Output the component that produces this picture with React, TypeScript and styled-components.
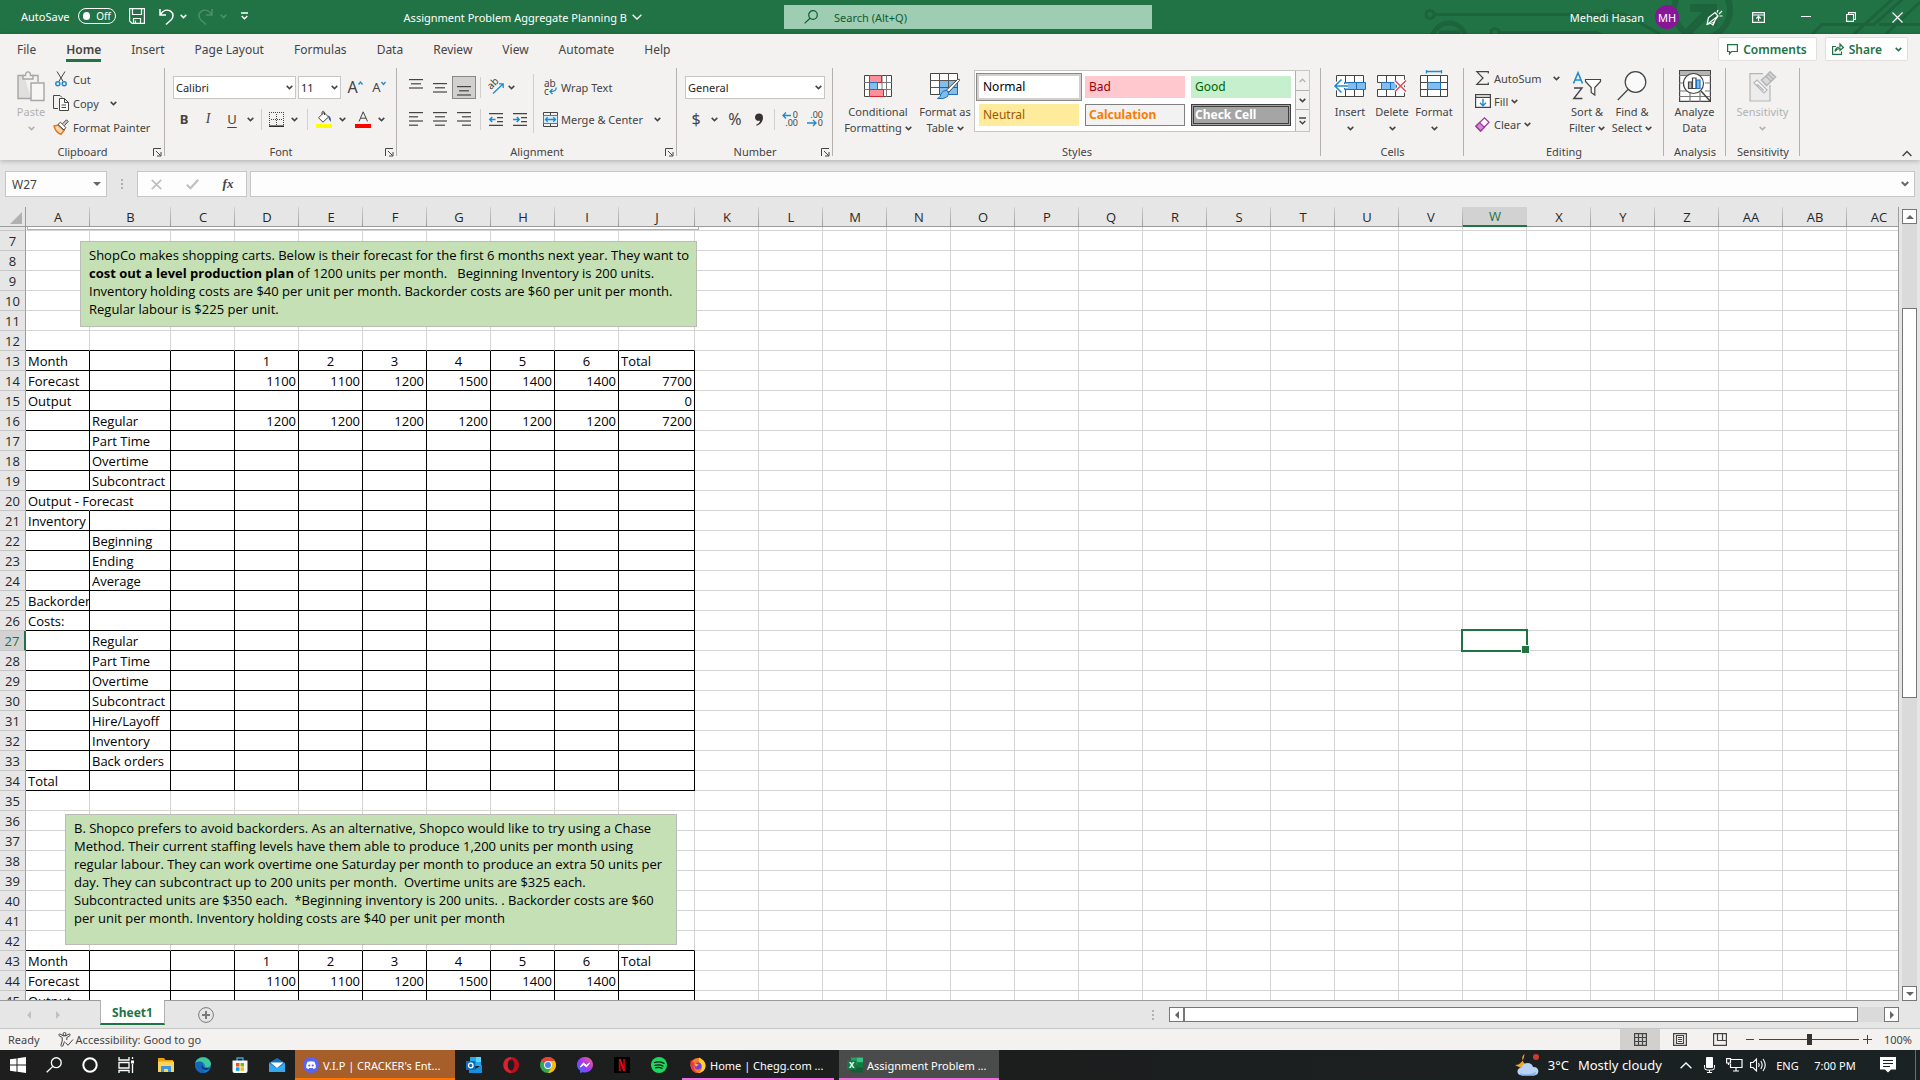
import React from "react";
import styled, { createGlobalStyle, css } from "styled-components";

const UI = `"Noto Sans", "Open Sans", sans-serif`;
const CELL = `"Open Sans", "Noto Sans", sans-serif`;
const GREEN = "#217346";
const BLUE = "#1e8bcd";
const INK = "#444444";

const Global = createGlobalStyle`
  * { box-sizing: border-box; }
  html, body { margin: 0; padding: 0; }
  body { font-family: ${UI}; font-size: 11px; color: ${INK}; overflow: hidden; }
  button, input, select { font: inherit; color: inherit; margin: 0; }
  button { background: none; border: 0; padding: 0; cursor: default; white-space: nowrap; }
  svg { display: block; flex: none; overflow: visible; }
`;

/* ---------- shared pieces ---------- */

const Window = styled.div`
  display: flex;
  flex-direction: column;
  height: 100vh;
  background: #e6e6e6;
`;

const Row = styled.div<{ $gap?: number }>`
  display: flex;
  align-items: center;
  gap: ${(p) => p.$gap ?? 0}px;
`;

const Spacer = styled.div`
  flex: 1;
`;

type SvgProps = { w: number; h: number; children: React.ReactNode; stroke?: string; sw?: number };
const Svg = ({ w, h, children, stroke = INK, sw = 1 }: SvgProps) => (
  <svg width={w} height={h} viewBox={`0 0 ${w} ${h}`} fill="none" stroke={stroke} strokeWidth={sw} aria-hidden="true">
    {children}
  </svg>
);

const Chevron = ({ color = INK }: { color?: string }) => (
  <Svg w={7} h={5} stroke={color} sw={1.5}>
    <path d="M0.7 0.9 L3.5 3.6 L6.3 0.9" />
  </Svg>
);

/* ---------- title bar ---------- */

const TitleBar = styled.header`
  position: relative;
  display: grid;
  grid-template-columns: 784fr 368fr 768fr;
  height: 34px;
  background: ${GREEN};
  color: #ffffff;
`;

const TitleArt = styled.div`
  position: absolute;
  right: 0;
  top: 0;
  height: 34px;
  overflow: hidden;
`;

const QuickAccess = styled.div`
  display: flex;
  align-items: center;
  height: 32px;
  padding-left: 21px;
`;

const IconButton = styled.button<{ $w: number; $h?: number; $on?: boolean }>`
  display: inline-flex;
  align-items: center;
  justify-content: center;
  flex: none;
  width: ${(p) => p.$w}px;
  height: ${(p) => p.$h ?? 24}px;
  ${(p) =>
    p.$on &&
    css`
      background: #d2d0ce;
      border: 1px solid #8a8886;
    `}
`;

const AutoSave = styled.label`
  display: flex;
  align-items: center;
  width: 95px;
  justify-content: space-between;
`;

const Toggle = styled.button`
  display: flex;
  align-items: center;
  gap: 6px;
  width: 38px;
  height: 16px;
  padding: 0 4px;
  border: 1px solid #ffffff;
  border-radius: 8px;
  font-size: 10px;
  line-height: 14px;
  &::before {
    content: "";
    width: 8px;
    height: 8px;
    border-radius: 50%;
    background: #ffffff;
  }
`;

const DocTitle = styled.button`
  display: flex;
  align-items: center;
  gap: 5px;
  height: 34px;
`;

const LeftTitle = styled.div`
  display: flex;
  justify-content: space-between;
  padding-right: 142px;
`;

const SearchBox = styled.label`
  display: flex;
  align-items: center;
  align-self: start;
  gap: 16px;
  height: 24px;
  margin-top: 5px;
  padding: 0 20px;
  background: #9fcdb3;
  color: #0e5c2f;
  input {
    flex: 1;
    min-width: 0;
    padding: 0;
    border: 0;
    outline: 0;
    background: none;
  }
  input::placeholder { color: #0e5c2f; opacity: 1; }
`;

const RightTitle = styled.div`
  position: relative;
  display: flex;
  align-items: center;
  justify-content: flex-end;
`;

const Avatar = styled.span`
  display: grid;
  place-items: center;
  width: 24px;
  height: 24px;
  margin: 0 15px 0 11px;
  border-radius: 50%;
  background: #881798;
  font-size: 11px;
`;

/* ---------- ribbon ---------- */

const Ribbon = styled.div`
  position: relative;
  z-index: 1;
  background: #f3f2f1;
  box-shadow: 0 1px 5px rgba(0, 0, 0, 0.25);
`;

const TabStrip = styled.nav`
  display: flex;
  height: 32px;
  padding: 0 12px 0 2px;
`;

const Tab = styled.button<{ $active?: boolean }>`
  height: 28px;
  padding: 0 15px;
  font-size: 12px;
  font-weight: ${(p) => (p.$active ? 600 : 400)};
  span {
    display: block;
    height: 28px;
    line-height: 31px;
    border-bottom: 3px solid ${(p) => (p.$active ? GREEN : "transparent")};
  }
`;

const PillButton = styled.button<{ $menu?: boolean }>`
  display: flex;
  align-items: center;
  gap: 5px;
  height: 24px;
  margin: 3px 0 0 8px;
  padding: ${(p) => (p.$menu ? "0 5px 0 6px" : "0 9px 0 8px")};
  border: 1px solid #e1dfdd;
  border-radius: 2px;
  background: #ffffff;
  color: ${GREEN};
  font-size: 12px;
  font-weight: 600;
`;

const Groups = styled.div`
  display: flex;
  height: 94px;
  padding-top: 2px;
`;

const GroupBox = styled.section<{ $w: number }>`
  position: relative;
  display: flex;
  flex-direction: column;
  width: ${(p) => p.$w}px;
  height: 92px;
  background: linear-gradient(#b3b0ad, #b3b0ad) right top / 1px 88px no-repeat;
`;

const GroupBody = styled.div<{ $pad?: number }>`
  display: flex;
  flex: none;
  height: 76px;
  padding-left: ${(p) => p.$pad ?? 0}px;
`;

const GroupLabel = styled.div`
  text-align: center;
  line-height: 16px;
`;

const Launcher = styled.button`
  position: absolute;
  right: 3px;
  bottom: 3px;
`;

const Stack = styled.div<{ $w?: number; $top?: number; $gap?: number }>`
  display: flex;
  flex: none;
  flex-direction: column;
  gap: ${(p) => p.$gap ?? 0}px;
  padding-top: ${(p) => p.$top ?? 0}px;
  ${(p) => p.$w && `width: ${p.$w}px;`}
`;

const BigButton = styled.button<{ $w: number; $muted?: boolean }>`
  display: flex;
  flex-direction: column;
  align-items: center;
  width: ${(p) => p.$w}px;
  height: 74px;
  flex: none;
  line-height: 16px;
  color: ${(p) => (p.$muted ? "#b1b1b1" : INK)};
`;

const BigIcon = styled.span`
  display: grid;
  place-items: center;
  height: 36px;
`;

const BigLine = styled.span`
  display: flex;
  align-items: center;
  justify-content: center;
  gap: 3px;
  height: 16px;
`;

const LineButton = styled.button<{ $h?: number }>`
  display: flex;
  align-items: center;
  gap: 3px;
  height: ${(p) => p.$h ?? 24}px;
  padding-bottom: 2px;
`;

const IconSlot = styled.span<{ $w: number }>`
  display: grid;
  place-items: center;
  width: ${(p) => p.$w}px;
`;

const ChevronSlot = styled.span`
  margin-left: 8px;
`;

const Divider = styled.span<{ $h?: number }>`
  width: 1px;
  height: ${(p) => p.$h ?? 21}px;
  background: #d2d0ce;
`;

const ComboWrap = styled.label<{ $w: number }>`
  display: grid;
  grid-template-columns: 1fr 14px;
  align-items: center;
  width: ${(p) => p.$w}px;
  height: 23px;
  border: 1px solid #c8c6c4;
  background: #ffffff;
  color: #262626;
  select {
    grid-area: 1 / 1 / 2 / 3;
    height: 21px;
    padding: 0 2px;
    border: 0;
    outline: 0;
    appearance: none;
    background: none;
  }
  svg { grid-area: 1 / 2 / 2 / 3; justify-self: end; margin-right: 2px; pointer-events: none; }
`;

const Combo = ({ w, label, value }: { w: number; label: string; value: string }) => (
  <ComboWrap $w={w}>
    <select aria-label={label} defaultValue={value}>
      <option>{value}</option>
    </select>
    <Chevron />
  </ComboWrap>
);

const Glyph = styled.span<{ $size?: number; $bold?: boolean; $italic?: boolean; $line?: boolean }>`
  font-size: ${(p) => p.$size ?? 13}px;
  line-height: 16px;
  font-weight: ${(p) => (p.$bold ? 700 : 400)};
  font-style: ${(p) => (p.$italic ? "italic" : "normal")};
  font-family: ${(p) => (p.$italic ? `"Liberation Serif", serif` : UI)};
  text-decoration: ${(p) => (p.$line ? "underline" : "none")};
  text-underline-offset: 3px;
`;

const Gallery = styled.div`
  display: flex;
  width: 336px;
  height: 62px;
  margin-top: 2px;
  border: 1px solid #c8c6c4;
  background: #ffffff;
`;

const Swatches = styled.div`
  display: grid;
  grid-template-columns: repeat(3, 100px);
  grid-auto-rows: 22px;
  gap: 6px;
  padding: 5px 4px;
  width: 320px;
`;

const Swatch = styled.button<{ $bg: string; $fg: string; $kind?: "picked" | "boxed" | "double" }>`
  padding: 0 4px;
  text-align: left;
  font-size: 12px;
  line-height: 20px;
  background: ${(p) => p.$bg};
  color: ${(p) => p.$fg};
  ${(p) => p.$kind === "picked" && `box-shadow: 0 0 0 2px #d2d0ce, 0 0 0 3px #8a8886;`}
  ${(p) =>
    p.$kind === "boxed" &&
    `border: 1px solid #7f7f7f; padding: 0 3px; line-height: 18px; font-weight: 700;`}
  ${(p) =>
    p.$kind === "double" &&
    `border: 3px double #3f3f3f; padding: 0 1px; line-height: 14px; font-weight: 700;`}
`;

const GalleryButtons = styled.div`
  display: grid;
  grid-template-rows: 20px 19px 21px;
  width: 15px;
  button {
    display: grid;
    place-items: center;
    border-left: 1px solid #b3b0ad;
    border-bottom: 1px solid #b3b0ad;
    background: #f3f2f1;
  }
  button:last-child { border-bottom: 0; }
`;

const CollapseButton = styled.button`
  align-self: flex-end;
  margin: 0 8px 3px auto;
`;

/* ---------- formula bar ---------- */

const FormulaBar = styled.div`
  display: flex;
  align-items: center;
  height: 47px;
  padding: 1px 5px 0;
`;

const Field = styled.label<{ $w?: number }>`
  display: flex;
  align-items: center;
  justify-content: space-around;
  height: 26px;
  border: 1px solid #c6c6c6;
  background: #fdfdfd;
  ${(p) => (p.$w ? `width: ${p.$w}px;` : "flex: 1; margin-left: 3px;")}
  padding: 0 5px 0 6px;
  input {
    flex: 1;
    min-width: 0;
    padding: 0;
    border: 0;
    outline: 0;
    background: none;
    font-size: 12px;
  }
`;

const Tools = styled.div`
  display: flex;
  align-items: center;
  justify-content: space-between;
  width: 110px;
  height: 26px;
  padding: 0 12px;
  border: 1px solid #c6c6c6;
  background: #fdfdfd;
`;

const DotColumn = styled.span<{ $m: string }>`
  display: grid;
  gap: 2px;
  margin: ${(p) => p.$m};
  i { width: 2px; height: 2px; background: #b1b1b1; }
`;

const Dots = ({ m }: { m: string }) => (
  <DotColumn $m={m}>
    <i />
    <i />
    <i />
  </DotColumn>
);

/* ---------- sheet ---------- */

const SheetArea = styled.main`
  display: flex;
  flex: 1;
  min-height: 0;
`;

const SheetView = styled.div`
  position: relative;
  flex: 1;
  min-width: 0;
  overflow: hidden;
  border-right: 1px solid #9b9b9b;
  border-bottom: 1px solid #9b9b9b;
  background: #ffffff;
`;

const Grid = styled.table`
  table-layout: fixed;
  width: 1911px;
  border-collapse: separate;
  border-spacing: 0;
  font-family: ${CELL};
  font-size: 13px;
  line-height: 19px;
  color: #000000;
`;

const ColHead = styled.th<{ $on?: boolean }>`
  height: 20px;
  padding: 0;
  font-weight: 400;
  line-height: 18px;
  border-bottom: ${(p) => (p.$on ? `2px solid ${GREEN}` : "1px solid #9b9b9b")};
  background: ${(p) => (p.$on ? "#d2d2d2" : "linear-gradient(#d0d0d0, #9b9b9b) right / 1px 100% no-repeat #e6e6e6")};
  color: ${(p) => (p.$on ? GREEN : "#262626")};
`;

const Corner = styled.th`
  padding: 0;
  border-right: 1px solid #9b9b9b;
  border-bottom: 1px solid #9b9b9b;
  background: #e6e6e6;
  svg { margin: 3px 3px 0 auto; }
`;

const RowHead = styled.th<{ $on?: boolean }>`
  padding: 1px 0 0;
  font-weight: 400;
  line-height: 18px;
  border-right: ${(p) => (p.$on ? `2px solid ${GREEN}` : "1px solid #9b9b9b")};
  border-bottom: 1px solid #c6c6c6;
  background: ${(p) => (p.$on ? "#d2d2d2" : "#e6e6e6")};
  color: ${(p) => (p.$on ? GREEN : "#262626")};
`;

const Cell = styled.td<{ $right: string; $bottom: string; $align?: string; $spill?: boolean }>`
  position: relative;
  padding: 1px 2px 0;
  line-height: 18px;
  white-space: nowrap;
  overflow: ${(p) => (p.$spill ? "visible" : "hidden")};
  text-align: ${(p) => p.$align ?? "left"};
  border-right: 1px solid ${(p) => p.$right};
  border-bottom: 1px solid ${(p) => p.$bottom};
`;

const SheetRow = styled.tr<{ $h: number }>`
  height: ${(p) => p.$h}px;
`;

const Selection = styled.div`
  position: absolute;
  inset: -2px;
  z-index: 1;
  border: 2px solid ${GREEN};
  &::after {
    content: "";
    position: absolute;
    right: -4px;
    bottom: -4px;
    width: 7px;
    height: 7px;
    border: 1px solid #ffffff;
    background: ${GREEN};
  }
`;

const Note = styled.div<{ $x: number; $y: number; $w: number; $h: number }>`
  position: absolute;
  left: ${(p) => p.$x}px;
  top: ${(p) => p.$y}px;
  width: ${(p) => p.$w}px;
  height: ${(p) => p.$h}px;
  padding: 4px 8px;
  border: 1px solid #b9bdb5;
  background: #c5e0b4;
  color: #000000;
  font-family: ${CELL};
  font-size: 13px;
  line-height: 18px;
  white-space: pre;
`;

const HiddenNoteEdge = styled.div`
  position: absolute;
  left: 27px;
  top: 20px;
  width: 672px;
  height: 3px;
  border: 1px solid #b1b1b1;
  border-top: 0;
  background: #ffffff;
`;

const SideBar = styled.div`
  display: flex;
  flex-direction: column;
  width: 21px;
  padding: 2px 3px 0;
`;

const ScrollButton = styled.button`
  display: grid;
  place-items: center;
  flex: none;
  width: 15px;
  height: 15px;
  border: 1px solid #777777;
  background: #ffffff;
`;

const VTrack = styled.div`
  flex: 1;
  display: grid;
  grid-template-rows: 84fr 390fr 288fr;
  background: #dadada;
  i { grid-row: 2; border: 1px solid #777777; background: #ffffff; }
`;

const Arrow = ({ d, color = "#666666" }: { d: "up" | "down" | "left" | "right"; color?: string }) => {
  const paths = { up: "M0 6 L4 2 L8 6Z", down: "M0 2 L4 6 L8 2Z", left: "M6 0 L2 4 L6 8Z", right: "M2 0 L6 4 L2 8Z" };
  return (
    <Svg w={8} h={8} stroke="none">
      <path d={paths[d]} fill={color} />
    </Svg>
  );
};

const LABELS_A: Record<number, string> = {
  13: "Month", 14: "Forecast", 15: "Output", 20: "Output - Forecast", 21: "Inventory", 25: "Backorder",
  26: "Costs:", 34: "Total", 43: "Month", 44: "Forecast", 45: "Output",
};
const LABELS_B: Record<number, string> = {
  16: "Regular", 17: "Part Time", 18: "Overtime", 19: "Subcontract", 22: "Beginning", 23: "Ending", 24: "Average",
  27: "Regular", 28: "Part Time", 29: "Overtime", 30: "Subcontract", 31: "Hire/Layoff", 32: "Inventory", 33: "Back orders",
};
const MONTHS = ["1", "2", "3", "4", "5", "6", "Total"];
const FORECAST = ["1100", "1100", "1200", "1500", "1400", "1400"];
const VALUES: Record<number, string[]> = {
  13: MONTHS,
  14: [...FORECAST, "7700"],
  15: ["", "", "", "", "", "", "0"],
  16: ["1200", "1200", "1200", "1200", "1200", "1200", "7200"],
  43: MONTHS,
  44: FORECAST,
};
const COLUMNS = [..."ABCDEFGHIJKLMNOPQRSTUVWXYZ", "AA", "AB", "AC"];
const COLUMN_WIDTH: Record<string, number> = { B: 81, J: 76 };
const ROWS = Array.from({ length: 39 }, (_, i) => i + 7);
const SOFT = "#d4d4d4";

const cellText = (row: number, col: number) =>
  col === 0 ? LABELS_A[row] : col === 1 ? LABELS_B[row] : col >= 3 && col <= 9 ? VALUES[row]?.[col - 3] : undefined;

const Sheet = () => (
  <SheetView>
    <Grid>
      <colgroup>
        <col style={{ width: 26 }} />
        {COLUMNS.map((c) => (
          <col key={c} style={{ width: COLUMN_WIDTH[c] ?? 64 }} />
        ))}
      </colgroup>
      <thead>
        <tr>
          <Corner aria-label="Select all">
            <Svg w={12} h={12} stroke="none">
              <path d="M12 0 V12 H0Z" fill="#b1b1b1" />
            </Svg>
          </Corner>
          {COLUMNS.map((c) => (
            <ColHead key={c} $on={c === "W"}>{c}</ColHead>
          ))}
        </tr>
      </thead>
      <tbody>
        <SheetRow $h={4}>
          <RowHead />
          {COLUMNS.map((c) => (
            <Cell key={c} $right={SOFT} $bottom={SOFT} />
          ))}
        </SheetRow>
        {ROWS.map((r) => (
          <SheetRow key={r} $h={20}>
            <RowHead $on={r === 27}>{r}</RowHead>
            {COLUMNS.map((c, i) => {
              const inTable = i < 10 && ((r >= 13 && r <= 34) || r >= 43);
              const underline = i < 10 && (inTable || r === 12 || r === 42);
              const header = r === 13 || r === 43;
              const spill = r === 20 && i === 0;
              const picked = r === 27 && c === "W";
              return (
                <Cell
                  key={c}
                  $right={spill ? "#ffffff" : inTable ? "#000000" : SOFT}
                  $bottom={underline ? "#000000" : SOFT}
                  $spill={spill || picked}
                  $align={i < 3 || (header && i === 9) ? "left" : header ? "center" : "right"}
                >
                  {cellText(r, i)}
                  {picked && <Selection />}
                </Cell>
              );
            })}
          </SheetRow>
        ))}
      </tbody>
    </Grid>
    <HiddenNoteEdge />
    <Note $x={80} $y={34} $w={617} $h={86}>
      {"ShopCo makes shopping carts. Below is their forecast for the first 6 months next year. They want to\n"}
      <b>cost out a level production plan</b>
      {" of 1200 units per month.   Beginning Inventory is 200 units.\nInventory holding costs are $40 per unit per month. Backorder costs are $60 per unit per month.\nRegular labour is $225 per unit."}
    </Note>
    <Note $x={65} $y={607} $w={612} $h={131}>
      {"B. Shopco prefers to avoid backorders. As an alternative, Shopco would like to try using a Chase\nMethod. Their current staffing levels have them able to produce 1,200 units per month using\nregular labour. They can work overtime one Saturday per month to produce an extra 50 units per\nday. They can subcontract up to 200 units per month.  Overtime units are $325 each.\nSubcontracted units are $350 each.  *Beginning inventory is 200 units. . Backorder costs are $60\nper unit per month. Inventory holding costs are $40 per unit per month"}
    </Note>
  </SheetView>
);

/* ---------- sheet tabs and status ---------- */

const SheetTabs = styled.div`
  display: flex;
  align-items: center;
  height: 28px;
  padding: 0 21px 0 25px;
  border-bottom: 1px solid #c6c6c6;
`;

const SheetTab = styled.button`
  align-self: flex-start;
  width: 65px;
  height: 25px;
  margin: -1px 33px 0 38px;
  padding-top: 2px;
  z-index: 1;
  border-bottom: 2px solid ${GREEN};
  border-left: 1px solid #b1b1b1;
  border-right: 1px solid #b1b1b1;
  background: #ffffff;
  color: ${GREEN};
  font-size: 12px;
  font-weight: 700;
`;

const HScroll = styled.div`
  display: flex;
  width: 730px;
`;

const HTrack = styled.div`
  flex: 1;
  display: grid;
  grid-template-columns: 674fr 26fr;
  background: #dadada;
  i { border: 1px solid #777777; background: #ffffff; }
`;

const StatusBar = styled.footer`
  display: flex;
  align-items: center;
  height: 21px;
  padding: 0 8px;
  background: #f3f2f1;
`;

const ViewButton = styled(IconButton)`
  background: ${(p) => (p.$on ? "#d2d0ce" : "none")};
  border: 0;
`;

const ZoomSlider = styled.input`
  appearance: none;
  width: 100px;
  height: 11px;
  background: linear-gradient(#444444, #444444) center / 100% 1px no-repeat;
  &::-webkit-slider-thumb {
    appearance: none;
    width: 5px;
    height: 11px;
    background: #333333;
  }
`;

const ZoomValue = styled.span`
  width: 36px;
  text-align: right;
`;

/* ---------- task bar ---------- */

const TaskBar = styled.div`
  display: flex;
  align-items: center;
  height: 30px;
  background: linear-gradient(90deg, #1e1e1e, #1c1e1e 55%, #1a2223);
  color: #ffffff;
`;

const TaskIcon = styled.button<{ $w?: number }>`
  display: grid;
  place-items: center;
  flex: none;
  width: ${(p) => p.$w ?? 37}px;
  height: 30px;
`;

const PinnedApps = styled.div`
  display: flex;
  padding-left: 3px;
`;

const OpenApps = styled.div`
  display: flex;
  gap: 5px;
  padding-left: 5px;
`;

const TaskApp = styled.button<{ $w: number; $bg: string; $bar: string }>`
  display: flex;
  align-items: center;
  gap: 4px;
  width: ${(p) => p.$w}px;
  height: 30px;
  padding-left: 8px;
  background: ${(p) => p.$bg};
  box-shadow: inset 0 -2px 0 ${(p) => p.$bar};
`;

const Weather = styled.button`
  display: flex;
  align-items: center;
  gap: 9px;
  margin-right: 9px;
  font-size: 13px;
`;

const TrayText = styled.button<{ $w: number }>`
  width: ${(p) => p.$w}px;
  text-align: center;
`;

const DeskEdge = styled.span`
  width: 5px;
  height: 30px;
  border-left: 1px solid #6a6e6e;
`;

/* ---------- icons ---------- */

const SaveIcon = () => (
  <Svg w={16} h={16} stroke="#fff" sw={1.2}>
    <path d="M0.6 0.6H15.4V15.4H3L0.6 13Z M3.5 0.6V6.5H12.5V0.6 M4.5 15.4V10.5H11.5V15.4 M6.5 15V12.5" />
  </Svg>
);
const UndoIcon = ({ faded, flip }: { faded?: boolean; flip?: boolean }) => (
  <Svg w={15} h={17} stroke={faded ? "#4d8f6b" : "#fff"} sw={1.5}>
    <path transform={flip ? "matrix(-1 0 0 1 15 0)" : undefined} d="M1 1V7H7 M1.3 6.7C4 2.5 8 1 11.5 3.2C15 5.6 14.6 9.3 12 12L7 16.5" />
  </Svg>
);
const SearchIcon = ({ color, s = 14 }: { color: string; s?: number }) => (
  <svg width={s} height={s} viewBox="0 0 14 14" fill="none" stroke={color} strokeWidth="1.2" aria-hidden="true">
    <circle cx="9" cy="5" r="4.3" />
    <path d="M6 8.2L0.6 13.4" />
  </svg>
);
const PasteIcon = () => (
  <Svg w={28} h={31} stroke="#a6a6a6" sw={1.4}>
    <path d="M7 4.5H1V27.5H14" fill="#e1dfdd" />
    <path d="M15 4.5H21V11" />
    <path d="M6 8V4.5H8.5C8.5 -0.3 13.5 -0.3 13.5 4.5H16V8Z" fill="#f3f2f1" />
    <path d="M14 12H27V29.5H14Z" fill="#f7f6f5" />
  </Svg>
);
const CutIcon = () => (
  <Svg w={12} h={16}>
    <path d="M2 0.5L8.2 10.5 M10 0.5L3.8 10.5" />
    <g stroke={BLUE} strokeWidth="1.5">
      <circle cx="2.8" cy="12.7" r="2" />
      <circle cx="9.2" cy="12.7" r="2" />
    </g>
  </Svg>
);
const CopyIcon = () => (
  <Svg w={16} h={16}>
    <path d="M5 13.5H0.5V0.5H7L9 2.5" />
    <path d="M6.5 3.5H11.5L15.5 7.5V15.5H6.5Z M11.5 3.5V7.5H15.5 M8.5 10H13 M8.5 12.5H13" fill="#fff" />
  </Svg>
);
const PainterIcon = () => (
  <Svg w={16} h={16}>
    <path d="M1 7L5 6L11 11.5L8 15.2C5 14.5 2.5 12 1 7Z" fill="#fbd7ae" stroke="#e07a1f" strokeWidth="1.5" />
    <path d="M5 5.5L7.5 3.2L12.8 8.5L11 11Z" fill="#fff" />
    <path d="M9.5 4.8L13.5 0.8L15.2 2.5L11.5 6.5" fill="#ccc" />
  </Svg>
);
const BordersIcon = () => (
  <Svg w={15} h={15}>
    <path d="M0.5 0V14 M14.5 0V14 M0 0.5H15 M7.5 2V14 M2 7.5H14" strokeDasharray="1 1" />
    <path d="M0 14.2H15" stroke="#222" strokeWidth="1.5" />
  </Svg>
);
const FillIcon = () => (
  <Svg w={16} h={17}>
    <path d="M2.5 6.8L8 1.5L12.5 6L7 11.2Z M6 3.5V1Q7.5 -0.5 8.5 1.2V4" fill="#fff" />
    <path d="M12 4.5Q15.5 5.5 14.8 11Q12.5 9 12 4.5Z" fill="#2b579a" stroke="none" />
    <path d="M0 15H16" stroke="#ffff00" strokeWidth="4" />
  </Svg>
);
const FontColorIcon = () => (
  <Svg w={16} h={17}>
    <path d="M4 10.5L8.2 0.8L12.5 10.5 M5.3 7.2H11.2" />
    <path d="M0 15H16" stroke="#ff0000" strokeWidth="4" />
  </Svg>
);
const Lines = ({ rows, y = 0, h = 14 }: { rows: [number, number][]; y?: number; h?: number }) => (
  <Svg w={14} h={h} sw={1.2}>
    {rows.map(([a, b], i) => (
      <path key={i} d={`M${a} ${y + 0.6 + i * 4.2}H${b}`} />
    ))}
  </Svg>
);
const SHORT: [number, number][] = [[0, 14], [2, 12], [0, 14]];
const IndentIcon = ({ out }: { out?: boolean }) => (
  <Svg w={14} h={13} sw={1.2}>
    <path d="M0 0.6H14 M8 4.6H14 M8 8.6H14 M0 12.4H14" />
    <path d={out ? "M6.5 6.5H1 M3.2 4L0.8 6.5L3.2 9" : "M0 6.5H6 M3.8 4L6.2 6.5L3.8 9"} stroke={BLUE} strokeWidth="1.5" />
  </Svg>
);
const SvgLetters = styled.text`
  font-family: ${UI};
  stroke: none;
  fill: ${INK};
`;
const OrientationIcon = () => (
  <Svg w={16} h={16}>
    <SvgLetters fontSize="10" transform="translate(3 11) rotate(-45)">ab</SvgLetters>
    <path d="M5 14.5L15 5 M11 4.8H15.2V9" stroke={BLUE} strokeWidth="1.3" />
  </Svg>
);
const WrapIcon = () => (
  <Svg w={15} h={17}>
    <SvgLetters fontSize="10" x="1" y="8">ab</SvgLetters>
    <SvgLetters fontSize="10" x="1" y="16">c</SvgLetters>
    <path d="M13 8.5Q14 12.5 7.5 12.5 M9.5 10L7 12.5L9.5 15" stroke={BLUE} strokeWidth="1.4" />
  </Svg>
);
const MergeIcon = () => (
  <Svg w={15} h={15}>
    <path d="M0.5 0.5H14.5V14.5H0.5Z M7.5 0.5V3 M7.5 12V14.5" />
    <path d="M0.5 3.5H14.5V11.5H0.5Z" fill="#d9ecf8" stroke={BLUE} />
    <path d="M2.5 7.5H12.5 M4.7 5.3L2.5 7.5L4.7 9.7 M10.3 5.3L12.5 7.5L10.3 9.7" stroke={BLUE} strokeWidth="1.3" />
  </Svg>
);
const DecimalIcon = ({ less }: { less?: boolean }) => (
  <Svg w={17} h={16}>
    <SvgLetters fontSize="9" x="16" y="7" textAnchor="end">{less ? ".00" : "0"}</SvgLetters>
    <SvgLetters fontSize="9" x="16" y="15" textAnchor="end">{less ? "0" : ".00"}</SvgLetters>
    <path d={less ? "M0 12H9 M6 9L9 12L6 15" : "M9 4.5H1 M4 1.5L1 4.5L4 7.5"} stroke={BLUE} strokeWidth="1.4" />
  </Svg>
);
const CondIcon = () => (
  <Svg w={28} h={22}>
    <path d="M0.5 0.5H27.5V21.5H0.5Z" fill="#fff" />
    <path d="M0 7.5H28 M0 14.5H28 M5.5 0V22 M18 0V22 M22.5 0V22" stroke="#777" />
    <path d="M5.5 0.5H17.5V7.5H5.5Z M5.5 14.5H19.5V21.5H5.5Z" fill="#ff8f98" stroke="#d8262c" />
    <path d="M5.5 7.5H13.5V14.5H5.5Z" fill="#83bdec" stroke="#1e6fbf" />
  </Svg>
);
const TableIcon = () => (
  <Svg w={31} h={28}>
    <path d="M0.5 1.5H27.5V22.5H0.5Z" fill="#fff" />
    <path d="M9.5 8.5H27.5V22.5H9.5Z" fill="#83bdec" stroke="#1e6fbf" />
    <path d="M0 8.5H28 M0 15.5H28 M9.5 1V22 M18.5 1V22" stroke="#555" />
    <path d="M29.5 8.5L19 20L16 18.5L27.5 7.5Q30 6.5 29.5 8.5Z" fill="#fff" />
    <path d="M17 18.5Q20 21 17.5 24.5Q14 27.5 7.5 26.5Q11 25 11 22Q13 17.5 17 18.5Z" fill="#83bdec" stroke="#1e6fbf" />
  </Svg>
);
const InsertIcon = () => (
  <Svg w={32} h={28}>
    <path d="M2.5 3.5H29.5V24.5H2.5Z M11.5 3.5V24.5 M20.5 3.5V24.5" fill="#fff" />
    <path d="M10.5 10.5H31.5V17.5H10.5Z M22.5 10.5V17.5" fill="#83bdec" stroke="#1e6fbf" />
    <path d="M14 14H1 M7.5 7.5L1 14L7.5 20.5" stroke="#fff" strokeWidth="4" />
    <path d="M14 14H1 M7.5 7.5L1 14L7.5 20.5" stroke={BLUE} strokeWidth="1.6" />
  </Svg>
);
const DeleteIcon = () => (
  <Svg w={30} h={28}>
    <path d="M0.5 3.5H27.5V24.5H0.5V17.5H4.5V10.5H0.5Z M9.5 3.5V24.5 M18.5 3.5V24.5" fill="#fff" />
    <path d="M4.5 10.5H19.5V17.5H4.5Z M13.5 10.5V17.5" fill="#83bdec" stroke="#1e6fbf" />
    <path d="M18.5 9L29 19.5 M29 9L18.5 19.5" stroke="#fff" strokeWidth="4" />
    <path d="M18 8.5L29 19.5 M29 8.5L18 19.5" stroke="#e8474c" strokeWidth="1.5" />
  </Svg>
);
const FormatIcon = () => (
  <Svg w={28} h={32}>
    <path d="M0.5 5.5H27.5V26.5H0.5Z M0 12.5H28 M0 19.5H28 M7.5 5V27 M20.5 5V27" fill="#fff" />
    <path d="M7.5 12.5H20.5V19.5H7.5Z" fill="#83bdec" stroke="#1e6fbf" />
    <path d="M6.5 1.5H21.5 M6.5 0V3.5 M21.5 0V3.5" stroke={BLUE} strokeWidth="1.3" />
  </Svg>
);
const SumIcon = () => (
  <Svg w={13} h={14} sw={1.2}>
    <path d="M12.3 2.5V0.6H0.8L7 7L0.8 13.4H12.3V11.5" />
  </Svg>
);
const FillDownIcon = () => (
  <Svg w={16} h={14} sw={1.2}>
    <path d="M0.6 0.6H15.4V13.4H0.6Z M0.6 3.3H15.4" fill="#fff" />
    <path d="M8 4.8V11.5 M5 8.8L8 11.8L11 8.8" stroke={BLUE} strokeWidth="1.4" />
  </Svg>
);
const ClearIcon = () => (
  <Svg w={15} h={15} stroke="#a3379f" sw={1.3}>
    <path d="M1 9L9.5 0.8L14 5.2L5.5 14L1 9.5Z" fill="#fff" />
    <path d="M1 9.2L4.6 5.6L9.4 10.2L5.6 14Z" fill="#d98ad6" />
  </Svg>
);
const SortIcon = () => (
  <Svg w={30} h={28} sw={1.2}>
    <path d="M1.5 11.5L6 0.8L10.5 11.5 M3 8H9" stroke={BLUE} strokeWidth="1.6" />
    <path d="M2 16H10L1.8 26.5H10.4" strokeWidth="1.4" />
    <path d="M13.5 7.5H28.5V9.5L22.8 15.5V23L19.2 20.5V15.5L13.5 9.5Z" fill="#fff" />
  </Svg>
);
const FindIcon = () => (
  <Svg w={30} h={30} sw={1.2}>
    <circle cx="18.5" cy="11" r="10.3" fill="#fafafa" />
    <path d="M11 18.5L0.8 29" />
  </Svg>
);
const AnalyzeIcon = () => (
  <Svg w={32} h={32} sw={1.2}>
    <path d="M0.6 0.6H31.4V31.4H0.6Z" fill="#fff" />
    <path d="M1 1H31V5H1Z" fill="#b5b5b5" stroke="none" />
    <path d="M0 5.5H32 M0 13H8 M0 21H8 M0 26.5H32 M11 22V32 M21 22V32 M26 13H32 M26 21H32" stroke="#777" />
    <circle cx="14.5" cy="13.5" r="10" fill="#fff" />
    <path d="M22 21L31.5 31.5" strokeWidth="1.5" />
    <path d="M9.5 12H13V18.5H9.5Z" fill="#b5b5b5" />
    <path d="M13.5 8H17V18.5H13.5Z" fill="#fff" />
    <path d="M17.5 10H21V18.5H17.5Z" fill="#83bdec" stroke="#1e6fbf" />
  </Svg>
);
const SensitivityIcon = () => (
  <Svg w={28} h={31} stroke="#b5b5b5" sw={1.2}>
    <path d="M14 2.6H1V30H21V14" fill="#ececec" />
    <path d="M5 12L8 9L18 19L15 22Z M8 13L15 19.5" fill="#fff" />
    <path d="M12.5 9L17 5L22 10.5L17.5 14.5Z M17 5L21 0.8L26.5 6L22 10.5 M19 3L24 8" fill="#dadada" strokeWidth="1.6" />
  </Svg>
);
const LauncherIcon = () => (
  <Svg w={9} h={9}>
    <path d="M0.5 8V0.5H8 M3 3L7.5 7.5 M8 4V8H4" />
  </Svg>
);

const Group = ({ label, w, launcher, pad, children }: {
  label: string; w: number; launcher?: boolean; pad?: number; children: React.ReactNode;
}) => (
  <GroupBox $w={w} aria-label={label}>
    <GroupBody $pad={pad}>{children}</GroupBody>
    <GroupLabel>{label}</GroupLabel>
    {launcher && (
      <Launcher aria-label={`${label} settings`}>
        <LauncherIcon />
      </Launcher>
    )}
  </GroupBox>
);

const Big = ({ w, icon, lines, arrow, muted }: {
  w: number; icon: React.ReactNode; lines: string[]; arrow?: boolean; muted?: boolean;
}) => (
  <BigButton $w={w} $muted={muted}>
    <BigIcon>{icon}</BigIcon>
    <BigLine>{lines[0]}</BigLine>
    <BigLine>
      {lines[1]}
      {arrow && <Chevron color={muted ? "#b1b1b1" : INK} />}
    </BigLine>
  </BigButton>
);

const TABS = ["File", "Home", "Insert", "Page Layout", "Formulas", "Data", "Review", "View", "Automate", "Help"];

const RibbonGroups = () => (
  <Groups>
    <Group label="Clipboard" w={165} launcher pad={10}>
      <Big w={42} icon={<PasteIcon />} lines={["Paste"]} arrow muted />
      <Stack>
        <LineButton><IconSlot $w={18}><CutIcon /></IconSlot>Cut</LineButton>
        <LineButton><IconSlot $w={18}><CopyIcon /></IconSlot>Copy<ChevronSlot><Chevron /></ChevronSlot></LineButton>
        <LineButton><IconSlot $w={18}><PainterIcon /></IconSlot>Format Painter</LineButton>
      </Stack>
    </Group>

    <Group label="Font" w={232} launcher pad={8}>
      <Stack $top={7} $gap={8}>
        <Row>
          <Row $gap={2}>
            <Combo w={123} label="Font" value="Calibri" />
            <Combo w={43} label="Font size" value="11" />
          </Row>
          <IconButton $w={28} aria-label="Increase font size">
            <Glyph $size={16}>A</Glyph>
            <Svg w={5} h={12} stroke={BLUE} sw={1.3}><path d="M0.5 3.5L2.5 1L4.5 3.5" /></Svg>
          </IconButton>
          <IconButton $w={20} aria-label="Decrease font size">
            <Glyph $size={13}>A</Glyph>
            <Svg w={5} h={12} stroke={BLUE} sw={1.3}><path d="M0.5 1L2.5 3.5L4.5 1" /></Svg>
          </IconButton>
        </Row>
        <Row>
          <IconButton $w={22} aria-label="Bold"><Glyph $bold>B</Glyph></IconButton>
          <IconButton $w={26} aria-label="Italic"><Glyph $size={14} $italic>I</Glyph></IconButton>
          <IconButton $w={22} aria-label="Underline"><Glyph $line>U</Glyph></IconButton>
          <IconButton $w={14} aria-label="Underline styles"><Chevron /></IconButton>
          <Row $gap={4}>
            <span />
            <Divider />
            <IconButton $w={20} aria-label="Borders"><BordersIcon /></IconButton>
          </Row>
          <IconButton $w={16} aria-label="Border styles"><Chevron /></IconButton>
          <Row $gap={5}>
            <span />
            <Divider />
            <IconButton $w={22} aria-label="Fill color"><FillIcon /></IconButton>
          </Row>
          <IconButton $w={14} aria-label="Fill colors"><Chevron /></IconButton>
          <IconButton $w={28} aria-label="Font color"><FontColorIcon /></IconButton>
          <IconButton $w={8} aria-label="Font colors"><Chevron /></IconButton>
        </Row>
      </Stack>
    </Group>

    <Group label="Alignment" w={280} launcher pad={7}>
      <Stack $top={7} $gap={8}>
        <Row>
          <IconButton $w={24} aria-label="Top align"><Lines rows={SHORT} h={17} /></IconButton>
          <IconButton $w={24} aria-label="Middle align"><Lines rows={SHORT} h={9} /></IconButton>
          <IconButton $w={24} $h={23} $on aria-label="Bottom align"><Lines rows={SHORT} y={8} h={18} /></IconButton>
          <Row $gap={4}>
            <span />
            <Divider />
            <IconButton $w={22} aria-label="Orientation"><OrientationIcon /></IconButton>
          </Row>
          <IconButton $w={8} aria-label="Orientation styles"><Chevron /></IconButton>
        </Row>
        <Row>
          <IconButton $w={24} aria-label="Align left"><Lines rows={[[0, 14], [0, 9], [0, 14], [0, 9]]} /></IconButton>
          <IconButton $w={24} aria-label="Center"><Lines rows={[[0, 14], [2, 12], [0, 14], [2, 12]]} /></IconButton>
          <IconButton $w={24} aria-label="Align right"><Lines rows={[[0, 14], [5, 14], [0, 14], [5, 14]]} /></IconButton>
          <Row $gap={4}>
            <span />
            <Divider />
            <IconButton $w={22} aria-label="Decrease indent"><IndentIcon out /></IconButton>
          </Row>
          <IconButton $w={26} aria-label="Increase indent"><IndentIcon /></IconButton>
        </Row>
      </Stack>
      <Stack $top={6} $w={10}>
        <Divider $h={59} />
      </Stack>
      <Stack $top={8} $gap={8}>
        <LineButton><WrapIcon />Wrap Text</LineButton>
        <LineButton><MergeIcon />Merge &amp; Center<ChevronSlot><Chevron /></ChevronSlot></LineButton>
      </Stack>
    </Group>

    <Group label="Number" w={156} launcher pad={8}>
      <Stack $top={8} $gap={8}>
        <Combo w={140} label="Number format" value="General" />
        <Row>
          <IconButton $w={22} aria-label="Currency"><Glyph $size={16}>$</Glyph></IconButton>
          <IconButton $w={14} aria-label="Currency styles"><Chevron /></IconButton>
          <IconButton $w={28} aria-label="Percent"><Glyph $size={16}>%</Glyph></IconButton>
          <IconButton $w={20} aria-label="Comma style">
            <Svg w={8} h={13} stroke="none"><path d="M4 0.5C6.5 0.5 8 2 8 4.5C8 8.5 5.5 11.5 1.5 12.7L1.2 11.8C3.5 10.8 4.8 9.4 5 7.8C1.8 8.2 0 6.6 0 4.2C0 2 1.8 0.5 4 0.5Z" fill="#333" /></Svg>
          </IconButton>
          <Row $gap={5}>
            <span />
            <Divider />
            <IconButton $w={20} aria-label="Increase decimal"><DecimalIcon /></IconButton>
            <IconButton $w={20} aria-label="Decrease decimal"><DecimalIcon less /></IconButton>
          </Row>
        </Row>
      </Stack>
    </Group>

    <Group label="Styles" w={488} pad={7}>
      <Big w={76} icon={<CondIcon />} lines={["Conditional", "Formatting"]} arrow />
      <Big w={58} icon={<TableIcon />} lines={["Format as", "Table"]} arrow />
      <Gallery>
        <Swatches>
          <Swatch $bg="#ffffff" $fg="#000000" $kind="picked">Normal</Swatch>
          <Swatch $bg="#ffc7ce" $fg="#9c0006">Bad</Swatch>
          <Swatch $bg="#c6efce" $fg="#006100">Good</Swatch>
          <Swatch $bg="#ffeb9c" $fg="#9c5700">Neutral</Swatch>
          <Swatch $bg="#f2f2f2" $fg="#fa7d00" $kind="boxed">Calculation</Swatch>
          <Swatch $bg="#a5a5a5" $fg="#ffffff" $kind="double">Check Cell</Swatch>
        </Swatches>
        <GalleryButtons>
          <button aria-label="Previous styles"><Svg w={7} h={5} stroke="#b1b1b1" sw={1.3}><path d="M0.7 4L3.5 1.2L6.3 4" /></Svg></button>
          <button aria-label="Next styles"><Chevron /></button>
          <button aria-label="More styles"><Svg w={7} h={8} sw={1.4}><path d="M0 1H7 M0.7 4L3.5 6.8L6.3 4" /></Svg></button>
        </GalleryButtons>
      </Gallery>
    </Group>

    <Group label="Cells" w={143} pad={8}>
      <Big w={42} icon={<InsertIcon />} lines={["Insert"]} arrow />
      <Big w={42} icon={<DeleteIcon />} lines={["Delete"]} arrow />
      <Big w={42} icon={<FormatIcon />} lines={["Format"]} arrow />
    </Group>

    <Group label="Editing" w={200} pad={10}>
      <Stack $w={90}>
        <LineButton $h={22}><IconSlot $w={17}><SumIcon /></IconSlot>AutoSum<ChevronSlot><Chevron /></ChevronSlot></LineButton>
        <LineButton $h={24}><IconSlot $w={17}><FillDownIcon /></IconSlot>Fill<Chevron /></LineButton>
        <LineButton $h={22}><IconSlot $w={17}><ClearIcon /></IconSlot>Clear<Chevron /></LineButton>
      </Stack>
      <Big w={46} icon={<SortIcon />} lines={["Sort &", "Filter"]} arrow />
      <Big w={44} icon={<FindIcon />} lines={["Find &", "Select"]} arrow />
    </Group>

    <Group label="Analysis" w={62}>
      <Big w={61} icon={<AnalyzeIcon />} lines={["Analyze", "Data"]} />
    </Group>

    <Group label="Sensitivity" w={74}>
      <Big w={73} icon={<SensitivityIcon />} lines={["Sensitivity"]} arrow muted />
    </Group>

    <CollapseButton aria-label="Collapse ribbon">
      <Svg w={10} h={7} sw={1.4}><path d="M0.6 6L5 1.5L9.4 6" /></Svg>
    </CollapseButton>
  </Groups>
);

const OfficeTop = () => (
  <TitleBar>
    <TitleArt>
      <svg width="496" height="34" viewBox="0 0 496 34" fill="none" stroke="#1d633c" strokeWidth="3" aria-hidden="true">
        <circle cx="6" cy="14.500" r="4" />
        <path d="M10 14.500H182L200 14L236 34 M75 32.500H172L180 36" />
        <circle cx="183" cy="14.500" r="4" />
        <circle cx="71" cy="32.500" r="4" />
        <circle cx="25" cy="40" r="17" strokeWidth="5" />
        <path d="M15 33H34V42" strokeWidth="5" />
        <circle cx="278" cy="10" r="28" strokeWidth="6" />
        <path d="M266 8H289V26 M288 8L264 32" strokeWidth="8" />
        <path d="M388 34L398 24.500H450L482 -4 M430 34L472 -4 M462 34L496 2 M455 24.500H496" />
      </svg>
    </TitleArt>
    <LeftTitle>
      <QuickAccess>
        <AutoSave>
          AutoSave
          <Toggle role="switch" aria-checked="false">Off</Toggle>
        </AutoSave>
        <IconButton $w={42} aria-label="Save"><SaveIcon /></IconButton>
        <IconButton $w={16} aria-label="Undo"><UndoIcon /></IconButton>
        <IconButton $w={18} aria-label="Undo list"><Chevron color="#fff" /></IconButton>
        <IconButton $w={26} aria-label="Redo"><UndoIcon faded flip /></IconButton>
        <IconButton $w={10} aria-label="Redo list"><Chevron color="#4d8f6b" /></IconButton>
        <IconButton $w={32} aria-label="Customize toolbar">
          <Svg w={7} h={8} stroke="#fff" sw={1.3}><path d="M0 1H7 M0.7 4L3.5 6.8L6.3 4" /></Svg>
        </IconButton>
      </QuickAccess>
      <DocTitle>
        Assignment Problem Aggregate Planning B
        <Svg w={10} h={6} stroke="#fff" sw={1.3}><path d="M0.6 0.7L5 5L9.4 0.7" /></Svg>
      </DocTitle>
    </LeftTitle>
    <SearchBox>
      <SearchIcon color="#0e5c2f" />
      <input type="text" aria-label="Search" placeholder="Search (Alt+Q)" />
    </SearchBox>
    <RightTitle>
      Mehedi Hasan
      <Avatar>MH</Avatar>
      <IconButton $w={40} aria-label="Coming soon">
        <Svg w={17} h={17} stroke="#fff" sw={1.2}>
          <path d="M1 15.500L2.500 8.500L9 3.500L12 7L7.500 13.500Z M1 15.500L12 7 M5 14.500L7 16L9 12 M11 3.500L12 1 M13 5L16 2 M13.500 7H16.500" />
        </Svg>
      </IconButton>
      <IconButton $w={49} aria-label="Ribbon display options">
        <Svg w={13} h={11} stroke="#fff" sw={1.2}><path d="M0.6 0.6H12.4V10.4H0.6Z M0.6 3H12.4 M6.500 9V4.500 M4.300 6.500L6.500 4.400L8.700 6.500" /></Svg>
      </IconButton>
      <IconButton $w={45} aria-label="Minimize"><Svg w={10} h={2} stroke="#fff"><path d="M0 0.500H10" /></Svg></IconButton>
      <IconButton $w={46} aria-label="Restore">
        <Svg w={10} h={10} stroke="#fff" sw={1.1}><path d="M0.600 2.500H7.500V9.400H0.600Z M2.500 2.500V0.600H9.400V7.500H7.500" /></Svg>
      </IconButton>
      <IconButton $w={46} aria-label="Close">
        <Svg w={11} h={11} stroke="#fff" sw={1.2}><path d="M0.500 0.500L10.500 10.500 M10.500 0.500L0.500 10.500" /></Svg>
      </IconButton>
    </RightTitle>
  </TitleBar>
);

/* ---------- task bar icons ---------- */

const AppSvg = ({ children }: { children: React.ReactNode }) => (
  <svg width="16" height="16" viewBox="0 0 16 16" fill="none" aria-hidden="true">{children}</svg>
);
const WindowsLogo = () => (
  <AppSvg><path d="M0 2.300L6.500 1.400V7.600H0Z M7.500 1.200L16 0V7.600H7.500Z M0 8.500H6.500V14.700L0 13.800Z M7.500 8.500H16V16L7.500 14.800Z" fill="#fff" /></AppSvg>
);
const TaskViewIcon = () => (
  <AppSvg><path d="M1 0V3H11V0 M1 5.500H11V11H1Z M1 16V13.500H11V16 M14.500 0V2 M14.500 7V16" stroke="#fff" strokeWidth="1.300" /><path d="M13 3.500H16V6.500H13Z" fill="#fff" /></AppSvg>
);
const ExplorerIcon = () => (
  <AppSvg><path d="M0 1H6L7.500 3H15V15H0Z" fill="#e8a20c" /><path d="M0 4.500H16V15H0Z" fill="#ffd25a" /><path d="M3 15V9H13V15H10V12H6V15Z" fill="#3a97e0" /></AppSvg>
);
const EdgeIcon = () => (
  <AppSvg><circle cx="8" cy="8" r="8" fill="#1b7fd0" /><path d="M0.300 6C2-1 14-2 16 6.500C16 10 12 11 10 9.500C11 6 5 3 0.300 6Z" fill="#3fc99b" /><path d="M0.300 6C5 3 8 5 8 6.500C6 8 6 13 11 15.200C4 18-1 12 0.300 6Z" fill="#1466b8" /><path d="M8 7C7 9 9 12 15 10.800C12 15 6 13 6.500 9Z" fill="#0c3f7a" /></AppSvg>
);
const StoreIcon = () => (
  <AppSvg><path d="M5 4V1H11V4" stroke="#32a8e0" strokeWidth="1.300" /><path d="M0.500 3.500H15.500V14Q15.500 16 13.500 16H2.500Q0.500 16 0.500 14Z" fill="#f6f6f6" /><path d="M4 6H7.500V9.500H4Z" fill="#f25022" /><path d="M8.500 6H12V9.500H8.500Z" fill="#7fba00" /><path d="M4 10.300H7.500V13.800H4Z" fill="#00a4ef" /><path d="M8.500 10.300H12V13.800H8.500Z" fill="#ffb900" /></AppSvg>
);
const MailIcon = () => (
  <AppSvg><path d="M0 6L8 1L16 6V15H0Z" fill="#1573c4" /><path d="M1.500 5.500H14.500L8 11Z" fill="#fff" /><path d="M0 6L8 11.500L16 6V15H0Z" fill="#36a9ee" /></AppSvg>
);
const DiscordIcon = () => (
  <AppSvg><circle cx="8" cy="8" r="8" fill="#5865f2" /><path d="M4.500 4.800Q8 3.500 11.500 4.800Q13 7.500 12.800 11L10.500 12L9.700 10.900H6.300L5.500 12L3.200 11Q3 7.500 4.500 4.800Z" fill="#fff" /><circle cx="6.300" cy="8.500" r="1.100" fill="#5865f2" /><circle cx="9.700" cy="8.500" r="1.100" fill="#5865f2" /></AppSvg>
);
const IconLetter = styled.text`
  font-family: ${UI};
  font-weight: 700;
  fill: #ffffff;
`;
const OutlookIcon = () => (
  <AppSvg><path d="M4 0H15V9H4Z" fill="#28a8ea" /><path d="M10 0H15V5H10Z" fill="#50d9ff" /><path d="M3 8L9.500 12L16 7.500V16H3Z" fill="#1490df" /><path d="M0 4H9.500V13H0Z" fill="#0f6cbd" /><circle cx="4.750" cy="8.500" r="2.300" stroke="#fff" strokeWidth="1.300" /></AppSvg>
);
const OperaIcon = () => (
  <AppSvg><ellipse cx="8" cy="8" rx="7.800" ry="8" fill="#e0202e" /><path d="M8 0C13 0 16 4 16 8S13 16 8 16Z" fill="#a70014" opacity="0.600" /><ellipse cx="8" cy="8" rx="3.300" ry="5.500" fill="#1e1e1e" /></AppSvg>
);
const ChromeIcon = () => (
  <AppSvg><circle cx="8" cy="8" r="8" fill="#34a853" /><path d="M8 8L1.100 4A8 8 0 0 1 14.900 4Z" fill="#ea4335" /><path d="M8 4H14.900A8 8 0 0 1 8 16L11.500 10Z" fill="#fbbc04" /><circle cx="8" cy="8" r="3.900" fill="#fff" /><circle cx="8" cy="8" r="3" fill="#4285f4" /></AppSvg>
);
const MessengerIcon = () => (
  <AppSvg>
    <defs><linearGradient id="msg" x1="0" y1="1" x2="1" y2="0"><stop stopColor="#2b78ff" /><stop offset="0.500" stopColor="#a334fa" /><stop offset="1" stopColor="#ff6b6b" /></linearGradient></defs>
    <path d="M8 0C12.500 0 16 3.300 16 7.700S12.500 15.400 8 15.400L5.500 15.200L3 16V13.500C1 12 0 10 0 7.700C0 3.300 3.500 0 8 0Z" fill="url(#msg)" />
    <path d="M3.200 10L6.500 5.800L9.300 8.200L12.800 6L9.500 9.900L6.700 7.700Z" fill="#fff" stroke="#fff" />
  </AppSvg>
);
const NetflixIcon = () => (
  <AppSvg><path d="M0 0H16V16H0Z" fill="#000" /><path d="M5.800 2V14 M10.200 2V14" stroke="#b1060f" strokeWidth="2" /><path d="M5.800 2L10.200 14" stroke="#e50914" strokeWidth="2" /></AppSvg>
);
const SpotifyIcon = () => (
  <AppSvg><circle cx="8" cy="8" r="8" fill="#1ed760" /><path d="M3.500 5.500Q8.500 4 13 6.300 M4 8.300Q8.500 7 12 9 M4.500 10.900Q8 9.800 11 11.400" stroke="#191919" strokeWidth="1.300" strokeLinecap="round" /></AppSvg>
);
const FirefoxIcon = () => (
  <AppSvg><circle cx="8" cy="8.500" r="7.500" fill="#ff7a1f" /><path d="M9 0.500C11 2 15.500 4 15.500 9C15.500 13 12 16 8 16C13 14 13 8 9.500 5.500C8.500 4 8.500 2 9 0.500Z" fill="#ffd23a" /><path d="M0.800 3C0 7 0 15 8 16C3 13 3 8 5 6L2.500 5Z" fill="#f0314f" /><circle cx="8" cy="9" r="3.500" fill="#7a3ce0" /><path d="M4.500 6.500Q7 6 9 8Q6.500 8.500 6 10Z" fill="#ffb03a" /></AppSvg>
);
const ExcelIcon = () => (
  <AppSvg><path d="M4 0.500H16V15.500H4Z" fill="#185c37" /><path d="M4 0.500H10V8H4Z" fill="#21a366" /><path d="M10 0.500H16V5.500H10Z" fill="#33c481" /><path d="M10 5.500H16V10.500H10Z" fill="#107c41" /><path d="M0 3.500H9.500V12.500H0Z" fill="#107c41" /><IconLetter x="2" y="11" fontSize="8">X</IconLetter></AppSvg>
);

const Tasks = () => (
  <TaskBar>
    <TaskIcon $w={36} aria-label="Start"><WindowsLogo /></TaskIcon>
    <TaskIcon $w={36} aria-label="Search"><SearchIcon color="#fff" s={16} /></TaskIcon>
    <TaskIcon $w={36} aria-label="Cortana"><AppSvg><circle cx="8" cy="8" r="6.700" stroke="#fff" strokeWidth="2" /></AppSvg></TaskIcon>
    <TaskIcon $w={36} aria-label="Task view"><TaskViewIcon /></TaskIcon>
    <PinnedApps>
      <TaskIcon aria-label="File Explorer"><ExplorerIcon /></TaskIcon>
      <TaskIcon aria-label="Edge"><EdgeIcon /></TaskIcon>
      <TaskIcon aria-label="Store"><StoreIcon /></TaskIcon>
      <TaskIcon aria-label="Mail"><MailIcon /></TaskIcon>
    </PinnedApps>
    <TaskApp $w={160} $bg="#a65e2a" $bar="#ff7500"><DiscordIcon />V.I.P | CRACKER's Ent...</TaskApp>
    <TaskIcon aria-label="Outlook"><OutlookIcon /></TaskIcon>
    <TaskIcon aria-label="Opera"><OperaIcon /></TaskIcon>
    <TaskIcon aria-label="Chrome"><ChromeIcon /></TaskIcon>
    <TaskIcon aria-label="Messenger"><MessengerIcon /></TaskIcon>
    <TaskIcon aria-label="Netflix"><NetflixIcon /></TaskIcon>
    <TaskIcon aria-label="Spotify"><SpotifyIcon /></TaskIcon>
    <OpenApps>
      <TaskApp $w={152} $bg="transparent" $bar="#f06fe0"><FirefoxIcon />Home | Chegg.com ...</TaskApp>
      <TaskApp $w={160} $bg="#4a4b4b" $bar="#f06fe0"><ExcelIcon />Assignment Problem ...</TaskApp>
    </OpenApps>
    <Spacer />
    <Weather>
      <Svg w={24} h={22} stroke="none">
        <path d="M9.500 0C5 3 8 10 12 11L6 14L0 11C6 11 9 6 9.500 0Z" fill="#f6a623" />
        <circle cx="21" cy="3" r="3" fill="#d03a2b" />
        <path d="M7 21.500C1 21.500 1 14 6.500 13.500C8 7.500 17 7.500 18 13C25 12.500 25 21.500 19 21.500Z" fill="#b8d3f5" />
        <path d="M5 19Q12 22 21 18Q21 21.500 18 21.500H7Q5 21 5 19Z" fill="#8db4ea" />
      </Svg>
      <span>3°C</span>
      <span>Mostly cloudy</span>
    </Weather>
    <TaskIcon $w={30} aria-label="Hidden icons"><Svg w={12} h={7} stroke="#fff" sw={1.3}><path d="M0.600 6.300L6 1L11.400 6.300" /></Svg></TaskIcon>
    <TaskIcon $w={17} aria-label="Microphone"><Svg w={11} h={16} stroke="#fff"><path d="M2.500 0.500H8.500V10.500H2.500Z" fill="#fff" /><path d="M0.500 8V10.500Q0.500 13 3 13H8Q10.500 13 10.500 10.500V8 M5.500 13V15.500 M3 15.500H8" /></Svg></TaskIcon>
    <TaskIcon $w={32} aria-label="Network"><Svg w={17} h={14} stroke="#fff" sw={1.2}><path d="M4.500 1.500H16V9.500H4.500V6 M10 9.500V13 M7 13H13 M0.600 0.600H4.500V5H0.600Z M2.500 5V7" /></Svg></TaskIcon>
    <TaskIcon $w={16} aria-label="Volume"><Svg w={17} h={14} stroke="#fff" sw={1.1}><path d="M0.600 4.500H3L6.500 1V13L3 9.500H0.600Z M8.500 5Q10 7 8.500 9 M10.800 3Q13.500 7 10.800 11 M13 1Q17.500 7 13 13" /></Svg></TaskIcon>
    <TrayText $w={43}>ENG</TrayText>
    <TrayText $w={52}>7:00 PM</TrayText>
    <TaskIcon $w={54} aria-label="Notifications">
      <Svg w={16} h={16} stroke="none"><path d="M0 0H16V12.500H11L8 15.500L5 12.500H0Z" fill="#fff" /><path d="M3 3.500H13 M3 6.500H13 M3 9.500H10" stroke="#1a2223" /></Svg>
    </TaskIcon>
    <DeskEdge />
  </TaskBar>
);

export default function App() {
  return (
    <Window>
      <Global />
      <OfficeTop />
      <Ribbon>
        <TabStrip>
          {TABS.map((t) => (
            <Tab key={t} $active={t === "Home"}><span>{t}</span></Tab>
          ))}
          <Spacer />
          <PillButton>
            <Svg w={11} h={11} stroke={GREEN} sw={1.2}><path d="M0.600 0.600H10.400V7.500H4.500L2.500 9.800V7.500H0.600Z" /></Svg>
            Comments
          </PillButton>
          <PillButton $menu>
            <Svg w={12} h={12} stroke={GREEN} sw={1.2}><path d="M4 3.500H0.600V11.400H9.500V8.500 M3 8.500Q3.500 4 8 4V1L11.400 4.500L8 7.500V5.500Q5 5.500 3 8.500Z" /></Svg>
            Share
            <ChevronSlot><Chevron color={GREEN} /></ChevronSlot>
          </PillButton>
        </TabStrip>
        <RibbonGroups />
      </Ribbon>
      <FormulaBar>
        <Field $w={102}>
          <input type="text" aria-label="Name box" defaultValue="W27" />
          <Arrow d="down" />
        </Field>
        <Dots m="0 14px 0 14px" />
        <Tools>
          <IconButton $w={13} aria-label="Cancel"><Svg w={11} h={11} stroke="#c0c0c0" sw={1.8}><path d="M0.800 0.800L10.200 10.200 M10.200 0.800L0.800 10.200" /></Svg></IconButton>
          <IconButton $w={14} aria-label="Enter"><Svg w={13} h={11} stroke="#c0c0c0" sw={2.2}><path d="M0.800 5.800L4.500 9.300L12.200 0.800" /></Svg></IconButton>
          <IconButton $w={12} aria-label="Insert function"><Glyph $italic $bold $size={13}>fx</Glyph></IconButton>
        </Tools>
        <Field>
          <input type="text" aria-label="Formula" />
          <Svg w={8} h={6} stroke="#666" sw={2}><path d="M0.800 1L4 4.200L7.200 1" /></Svg>
        </Field>
      </FormulaBar>
      <SheetArea>
        <Sheet />
        <SideBar>
          <ScrollButton aria-label="Scroll up"><Arrow d="up" /></ScrollButton>
          <VTrack><i /></VTrack>
          <ScrollButton aria-label="Scroll down"><Arrow d="down" /></ScrollButton>
        </SideBar>
      </SheetArea>
      <SheetTabs>
        <Row $gap={21}>
          <button aria-label="Previous sheet"><Arrow d="left" color="#c0c0c0" /></button>
          <button aria-label="Next sheet"><Arrow d="right" color="#c0c0c0" /></button>
        </Row>
        <SheetTab>Sheet1</SheetTab>
        <button aria-label="New sheet">
          <Svg w={16} h={16} stroke="#7a7a7a"><circle cx="8" cy="8" r="7.400" /><path d="M8 4V12 M4 8H12" strokeWidth="2" /></Svg>
        </button>
        <Spacer />
        <Dots m="0 15px 0 0" />
        <HScroll>
          <ScrollButton aria-label="Scroll left"><Arrow d="left" /></ScrollButton>
          <HTrack><i /></HTrack>
          <ScrollButton aria-label="Scroll right"><Arrow d="right" /></ScrollButton>
        </HScroll>
      </SheetTabs>
      <StatusBar>
        <Row $gap={18}>
          <span>Ready</span>
          <Row $gap={2}>
            <Svg w={16} h={15}><circle cx="6.500" cy="2" r="1.500" /><path d="M0.800 2.500Q1.500 1.500 3 2.500L5 3.800H8L10 2.500Q11.500 1.500 12.200 2.500Q12.500 3.500 11 4.300L8.800 5.500V8 M0.800 2.500Q0.500 3.500 2 4.300L4.200 5.500V9L2.800 13.500 M6.500 9.500L5 13.800Q3.500 14.800 2.800 13.500 M7.500 10.500L10 13.300L15 7.500" /></Svg>
            <span>Accessibility: Good to go</span>
          </Row>
        </Row>
        <Spacer />
        <ViewButton $w={40} $h={21} $on aria-label="Normal view"><Svg w={13} h={13} sw={1.2}><path d="M0.600 0.600H12.400V12.400H0.600Z M4.500 0V13 M8.500 0V13 M0 4.500H13 M0 8.500H13" /></Svg></ViewButton>
        <ViewButton $w={40} $h={21} aria-label="Page layout view"><Svg w={14} h={13} sw={1.2}><path d="M0.600 0.600H13.400V12.400H0.600Z M3.500 2.500H10.500V10.500H3.500Z M5 4.500H9 M5 6.500H9 M5 8.500H9" /></Svg></ViewButton>
        <ViewButton $w={40} $h={21} aria-label="Page break view"><Svg w={14} h={13} sw={1.2}><path d="M0.600 0.600H13.400V12.400H0.600Z M4.500 0.600V7.500H9.500V0.600 M9.500 7.500H13" /></Svg></ViewButton>
        <IconButton $w={19} $h={21} aria-label="Zoom out"><Svg w={8} h={9}><path d="M0 4.500H8" /></Svg></IconButton>
        <ZoomSlider type="range" aria-label="Zoom" min={0} max={100} defaultValue={50} />
        <IconButton $w={17} $h={21} aria-label="Zoom in"><Svg w={9} h={9}><path d="M0 4.500H9 M4.500 0V9" /></Svg></IconButton>
        <ZoomValue>100%</ZoomValue>
      </StatusBar>
      <Tasks />
    </Window>
  );
}
